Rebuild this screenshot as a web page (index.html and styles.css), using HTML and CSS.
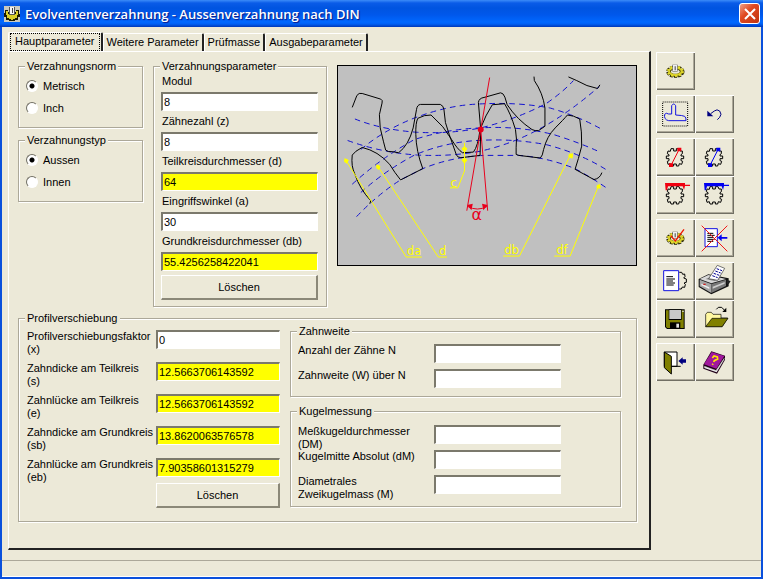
FILE: index.html
```html
<!DOCTYPE html>
<html lang="de">
<head>
    <meta charset="UTF-8">
    <meta name="viewport" content="width=device-width, initial-scale=1.0">
    <title>Evolventenverzahnung - Aussenverzahnung nach DIN</title>
    <link rel="stylesheet" href="styles.css">
</head>
<body>
    <!-- shared icon shapes -->
    <svg class="defs" width="0" height="0" aria-hidden="true">
        <symbol id="gear" viewBox="0 0 117 114">
            <path d="M45 32H53V39H61V32H69L72 39H79V47L75 50V54H83V62H75V68L80 70L77 79L70 77L68 84H61V78H53V84H45L43 77L36 79L34 70L39 68V62H31V54H39V50L34 47L36 39L43 40Z" fill="none" stroke="#000" stroke-width="3"/>
        </symbol>
        <symbol id="cog" viewBox="0 0 117 114">
            <g fill="none">
                <ellipse cx="58" cy="59" rx="23" ry="14" stroke="#222000" stroke-width="9" stroke-dasharray="9 3"/>
                <ellipse cx="58" cy="59" rx="18" ry="11" stroke="#444000" stroke-width="9"/>
                <ellipse cx="58" cy="58" rx="19" ry="11" stroke="#d8cf28" stroke-width="6"/>
                <ellipse cx="58" cy="58" rx="23" ry="14" stroke="#e4dc30" stroke-width="6" stroke-dasharray="6 6"/>
            </g>
            <path d="M49 38h16v21H49z" fill="#777"/>
            <path d="M51 39h12v18H51z" fill="#eee"/>
            <path d="M56 43h3v12h-3z" fill="#444"/>
        </symbol>
    </svg>

    <div class="window">
        <header class="titlebar">
            <svg class="app-icon" viewBox="0 0 16 16">
                <path d="M0 0h16v16H0z" fill="#c9c9c0"/>
                <path d="M1 4h3v2h8V4h3v4h1v3h-2v3h-3v1H5v-1H2v-3H0V7h1z" fill="#1a1a00"/>
                <path d="M2 5h2v3h8V5h2v4h-1v3h-2v1H9v1H7v-1H5v-1H3V9H2z" fill="#d8cf28"/>
                <path d="M5 1h6v8H5z" fill="#555"/>
                <path d="M6 1h4v7H6z" fill="#f4f4f4"/>
                <path d="M8 2h1v5H8z" fill="#444"/>
            </svg>
            <h1>Evolventenverzahnung - Aussenverzahnung nach DIN</h1>
            <button class="close" type="button" aria-label="Schließen">
                <svg viewBox="0 0 12 12"><path d="M1 1L11 11M11 1L1 11" stroke="#fff" stroke-width="2"/></svg>
            </button>
        </header>

        <main class="content">
            <div class="pages">
                <div class="tabs" role="tablist">
                    <button class="tab active" type="button" role="tab" aria-selected="true"><span>Hauptparameter</span></button>
                    <button class="tab" type="button" role="tab"><span>Weitere Parameter</span></button>
                    <button class="tab" type="button" role="tab"><span>Prüfmasse</span></button>
                    <button class="tab" type="button" role="tab"><span>Ausgabeparameter</span></button>
                </div>

                <form class="panel">
                    <div class="upper">
                        <div class="options">
                            <fieldset class="radios">
                                <legend>Verzahnungsnorm</legend>
                                <label><input type="radio" name="norm" checked>Metrisch</label>
                                <label><input type="radio" name="norm">Inch</label>
                            </fieldset>
                            <fieldset class="radios">
                                <legend>Verzahnungstyp</legend>
                                <label><input type="radio" name="typ" checked>Aussen</label>
                                <label><input type="radio" name="typ">Innen</label>
                            </fieldset>
                        </div>

                        <fieldset class="params">
                            <legend>Verzahnungsparameter</legend>
                            <label for="modul">Modul</label>
                            <input type="text" id="modul" value="8">
                            <label for="z">Zähnezahl (z)</label>
                            <input type="text" id="z" value="8">
                            <label for="d">Teilkreisdurchmesser (d)</label>
                            <input type="text" id="d" class="result" value="64">
                            <label for="a">Eingriffswinkel (a)</label>
                            <input type="text" id="a" value="30">
                            <label for="db">Grundkreisdurchmesser (db)</label>
                            <input type="text" id="db" class="result" value="55.4256258422041">
                            <button class="btn" type="button">Löschen</button>
                        </fieldset>

                        <svg class="drawing" viewBox="9 18 900 600">
                            <!-- pitch, base, tip and root circles -->
                            <g fill="none" stroke="#1010d0" stroke-width="3" stroke-dasharray="17 13">
                                <path d="M65 473Q130 405 198 362L265 328Q350 293 450 288L555 288Q640 294 725 328Q775 355 818 385"/>
                                <path d="M78 400Q150 335 240 287Q340 245 450 242Q545 238 640 256Q750 285 828 337"/>
                                <path d="M52 375Q140 295 240 240Q340 208 440 205Q550 198 660 225Q740 250 800 278"/>
                                <path d="M78 270Q150 210 240 175Q340 137 430 133Q550 126 650 145Q730 168 800 206"/>
                                <path d="M60 178Q140 210 245 218Q345 224 440 205Q550 178 640 130Q690 95 720 62"/>
                                <path d="M38 243Q140 280 250 287Q350 292 440 275Q530 255 610 212Q700 165 798 80"/>
                            </g>
                            <g fill="none" stroke="#000" stroke-width="3">
                                <path d="M52 143L66 107Q72 98 82 101L138 118Q145 121 142 130L134 165Q133 205 146 245L153 272Q158 278 175 277L192 280Q222 258 236 205L246 150Q248 135 258 134L318 134Q328 138 329 150Q330 190 345 225L366 285Q368 294 380 295L438 288L440 210L433 128Q435 115 450 113L500 99Q508 99 513 112L520 135Q550 180 595 210Q605 215 615 213L634 200V145Q628 100 602 62L601 50"/>
                                <path d="M705 51L730 62Q760 80 793 86L800 75"/>
                                <path d="M105 434L108 425Q75 390 60 345Q48 320 52 287Q60 275 82 264Q130 275 165 315Q180 340 198 362L265 328Q245 275 244 225Q243 190 250 176Q270 165 290 166Q330 200 352 240Q370 270 385 280L418 278Q432 260 438 210Q455 165 475 135L512 132Q530 160 545 210Q550 240 547 265V285L555 288L620 296Q627 290 630 270Q640 230 665 205Q690 180 702 166Q720 167 739 178Q746 215 745 260Q735 300 725 330L782 361Q800 358 806 340"/>
                            </g>
                            <!-- pressure angle -->
                            <g class="angle">
                                <path d="M467 53L398 455M440 210L461 455M400 442Q430 458 460 442" fill="none" stroke="#e8001c" stroke-width="3"/>
                                <circle cx="440" cy="210" r="9"/>
                                <path d="M399 438L416 434L412 454ZM461 438L444 434L448 454Z"/>
                                <text x="412" y="482">α</text>
                            </g>
                            <!-- dimension leaders -->
                            <g class="leader">
                                <path d="M391 250V335L371 386H347M33 303L215 595H262M130 322L312 595H338M712 285L557 592H508M796 380L710 592H662" fill="none" stroke="#ff0" stroke-width="3"/>
                                <path d="M391 280L382 268L391 260L400 268ZM391 294L400 302L391 314L382 302Z"/>
                                <path d="M28 296L42 303L34 314ZM124 315L138 322L130 333ZM718 280L717 298L704 292ZM800 374L802 389L789 385Z"/>
                                <circle cx="33" cy="304" r="6"/>
                                <circle cx="130" cy="323" r="6"/>
                                <circle cx="712" cy="289" r="7"/>
                                <circle cx="796" cy="382" r="6"/>
                                <text x="349" y="382">c</text>
                                <text x="217" y="590">da</text>
                                <text x="314" y="590">d</text>
                                <text x="511" y="587">db</text>
                                <text x="668" y="587">df</text>
                            </g>
                        </svg>
                    </div>

                    <fieldset class="profile">
                        <legend>Profilverschiebung</legend>
                        <div class="shift">
                            <label for="x">Profilverschiebungsfaktor (x)</label>
                            <input type="text" id="x" value="0">
                            <label for="s">Zahndicke am Teilkreis<br>(s)</label>
                            <input type="text" id="s" class="result" value="12.5663706143592">
                            <label for="e">Zahnlücke am Teilkreis<br>(e)</label>
                            <input type="text" id="e" class="result" value="12.5663706143592">
                            <label for="sb">Zahndicke am Grundkreis (sb)</label>
                            <input type="text" id="sb" class="result" value="13.8620063576578">
                            <label for="eb">Zahnlücke am Grundkreis (eb)</label>
                            <input type="text" id="eb" class="result" value="7.90358601315279">
                            <button class="btn" type="button">Löschen</button>
                        </div>

                        <div class="measures">
                            <fieldset class="measure">
                                <legend>Zahnweite</legend>
                                <label for="n">Anzahl der Zähne N</label>
                                <input type="text" id="n">
                                <label for="w">Zahnweite (W) über N</label>
                                <input type="text" id="w">
                            </fieldset>
                            <fieldset class="measure">
                                <legend>Kugelmessung</legend>
                                <label for="dm1">Meßkugeldurchmesser (DM)</label>
                                <input type="text" id="dm1">
                                <label for="dm2">Kugelmitte Absolut (dM)</label>
                                <input type="text" id="dm2">
                                <label for="m">Diametrales Zweikugelmass (M)</label>
                                <input type="text" id="m">
                            </fieldset>
                        </div>
                    </fieldset>
                </form>
            </div>

            <div class="toolbar">
                <div class="tools">
                    <button type="button" aria-label="Berechnen">
                        <svg viewBox="0 0 117 114"><use href="#cog"/></svg>
                    </button>
                </div>
                <div class="tools">
                    <button type="button" aria-label="Zahnform">
                        <svg viewBox="0 0 117 114">
                            <path d="M20 21H95V93H20Z" fill="none" stroke="#000" stroke-width="3" stroke-dasharray="3 3"/>
                            <path d="M47 57V32Q53 22 59 32V60Q80 61 86 64Q91 68 90 77H38Q23 74 26 58Q30 52 38 57Z" fill="none" stroke="#1414e0" stroke-width="3"/>
                        </svg>
                    </button>
                    <button type="button" aria-label="Rückgängig">
                        <svg viewBox="0 0 117 114">
                            <path d="M37 47V64H55Z" fill="#000080"/>
                            <path d="M47 56L58 48Q66 41 74 48Q82 58 74 67L67 74" fill="none" stroke="#000080" stroke-width="3"/>
                        </svg>
                    </button>
                </div>
                <div class="tools">
                    <button type="button" aria-label="Durchmesser rot">
                        <svg viewBox="0 0 117 114">
                            <use href="#gear"/>
                            <path d="M69 35L45 82" stroke="#f00010" stroke-width="3"/>
                            <path d="M64 29h12v11H64zM39 76h12v11H39z" fill="#f00010"/>
                        </svg>
                    </button>
                    <button type="button" aria-label="Durchmesser blau">
                        <svg viewBox="0 0 117 114">
                            <use href="#gear"/>
                            <path d="M69 35L45 82" stroke="#0000f0" stroke-width="3"/>
                            <path d="M64 29h12v11H64zM39 76h12v11H39z" fill="#0000f0"/>
                        </svg>
                    </button>
                    <button type="button" aria-label="Messschieber rot">
                        <svg viewBox="0 0 117 114">
                            <use href="#gear"/>
                            <path d="M27 21H87V26H102V30H87L84 42L80 31H36L33 43H29Z" fill="#f00010"/>
                        </svg>
                    </button>
                    <button type="button" aria-label="Messschieber blau">
                        <svg viewBox="0 0 117 114">
                            <use href="#gear"/>
                            <path d="M27 21H87V26H102V30H87L84 42L80 31H36L33 43H29Z" fill="#0000f0"/>
                        </svg>
                    </button>
                </div>
                <div class="tools">
                    <button type="button" aria-label="Prüfen">
                        <svg viewBox="0 0 117 114">
                            <use href="#cog"/>
                            <path d="M44 50L58 66L84 31" fill="none" stroke="#f01800" stroke-width="4"/>
                        </svg>
                    </button>
                    <button type="button" aria-label="Ausgabe löschen">
                        <svg viewBox="0 0 117 114">
                            <path d="M30 29H67V83H30Z" fill="#fff" stroke="#1414e0" stroke-width="3"/>
                            <path d="M37 43h18M37 49h22M37 55h18M37 61h22M37 67h18" stroke="#000" stroke-width="3"/>
                            <path d="M68 56L80 46V54H97V59H80V67Z" fill="#0000f0"/>
                            <path d="M20 20L97 97M97 20L20 97" stroke="#f01818" stroke-width="3"/>
                        </svg>
                    </button>
                </div>
                <div class="tools">
                    <button type="button" aria-label="Ausgabe">
                        <svg viewBox="0 0 117 114">
                            <path d="M23 26H68V86H23Z" fill="#fff" stroke="#1414e0" stroke-width="3"/>
                            <path d="M31 44h20M31 51h26M31 57h20M31 63h26M31 69h22" stroke="#000" stroke-width="3"/>
                            <path d="M70 31H77L80 37L86 36L87 44L83 48L91 51V61L84 63L88 67L86 76L79 75L76 81H70" fill="none" stroke="#000" stroke-width="3"/>
                        </svg>
                    </button>
                    <button type="button" aria-label="Drucken">
                        <svg viewBox="0 0 117 114">
                            <path d="M11 51L40 37L101 49V73L49 97L11 75Z" fill="#111"/>
                            <path d="M14 53L49 66V93L14 73Z" fill="#a5a5a5"/>
                            <path d="M49 66L93 53V72L49 93Z" fill="#777"/>
                            <path d="M14 51L40 39L93 51L49 64Z" fill="#d8d8d8"/>
                            <path d="M32 51L46 45L78 51L58 57Z" fill="#888"/>
                            <path d="M95 54L107 57L101 67L95 65Z" fill="#222"/>
                            <path d="M41 50L67 10L89 19L68 55Z" fill="#fff" stroke="#333" stroke-width="2"/>
                            <path d="M65 20L81 26M61 27L77 33M56 34L73 40M52 41L68 47" stroke="#000090" stroke-width="3" stroke-dasharray="8 3"/>
                            <path d="M19 65L43 76V81L19 70Z" fill="#eee"/>
                            <path d="M25 65h7v4h-7z" fill="#d02020"/>
                            <path d="M53 74L89 60V65L53 80Z" fill="#ccc"/>
                        </svg>
                    </button>
                    <button type="button" aria-label="Speichern">
                        <svg viewBox="0 0 117 114">
                            <path d="M27 28H86V87H33L27 81Z" fill="#000"/>
                            <path d="M30 31H83V84H34L30 80Z" fill="#808000"/>
                            <path d="M38 28H77V60H38Z" fill="#000"/>
                            <path d="M40 30H75V57H40Z" fill="#c8c8c8"/>
                            <path d="M79 32h4v4h-4z" fill="#eee"/>
                            <path d="M42 67H73V85H42Z" fill="#000"/>
                            <path d="M61 71h8v12h-8z" fill="#e0e0e0"/>
                        </svg>
                    </button>
                    <button type="button" aria-label="Öffnen">
                        <svg viewBox="0 0 117 114">
                            <path d="M32 79V43L37 37H49L54 43H78V54H98L82 80H32Z" fill="#fff8a0" stroke="#000" stroke-width="2"/>
                            <path d="M32 80L51 55H99L81 80Z" fill="#808000" stroke="#000" stroke-width="2"/>
                            <path d="M64 28L70 22H80L89 31" fill="none" stroke="#000" stroke-width="3"/>
                            <path d="M94 23V36H82Z" fill="#000"/>
                        </svg>
                    </button>
                </div>
                <div class="tools">
                    <button type="button" aria-label="Beenden">
                        <svg viewBox="0 0 117 114">
                            <path d="M25 27H63V70H25Z" fill="#fff" stroke="#000" stroke-width="3"/>
                            <path d="M25 27L46 40V93L25 74Z" fill="#808000" stroke="#000" stroke-width="3"/>
                            <path d="M48 70H74" stroke="#000" stroke-width="3"/>
                            <path d="M67 54L80 43V49H90V59H80V65Z" fill="#000080"/>
                        </svg>
                    </button>
                    <button type="button" aria-label="Hilfe">
                        <svg viewBox="0 0 117 114">
                            <path d="M25 65L49 25L90 38V50L66 92L25 77Z" fill="#200018"/>
                            <path d="M27 64L50 27L88 39L64 77Z" fill="#a0189c"/>
                            <path d="M28 69L63 82L66 77L88 44V49L65 88L28 75Z" fill="#eee"/>
                            <path d="M28 70L64 83L88 46" fill="none" stroke="#888" stroke-width="1"/>
                            <path d="M52 45L57 39L67 42L68 48L58 53L56 57M54 62L52 65" fill="none" stroke="#ffe800" stroke-width="5"/>
                        </svg>
                    </button>
                </div>
            </div>
        </main>

        <footer class="statusbar"></footer>
    </div>
</body>
</html>
```
FILE: styles.css
```css
* {
    box-sizing: border-box;
}

body {
    margin: 0;
    font-family: "Liberation Sans", Arial, sans-serif;
    font-size: 11px;
    line-height: 13px;
    color: #000;
    background-color: #ece9d8;
}

button,
input {
    font: inherit;
    color: inherit;
}

.defs {
    position: absolute;
}

.window {
    display: flex;
    flex-direction: column;
    min-height: 100vh;
    border: solid #0a50dc;
    border-width: 0 2px 2px;
}

/* title bar */
.titlebar {
    display: flex;
    align-items: center;
    height: 27px;
    margin: 0 -2px;
    padding: 0 3px 0 4px;
    background: linear-gradient(#3c8cf8 0, #0a5ce8 3px, #0054e0 8px, #0058ec 15px, #0068ff 22px, #0060f4 24px, #0038b8 27px);
}

.app-icon {
    width: 16px;
    height: 16px;
    margin-right: 5px;
}

.titlebar h1 {
    flex: 1;
    margin: 0;
    font-family: "Open Sans", "Trebuchet MS", sans-serif;
    font-size: 13px;
    font-weight: 600;
    line-height: 20px;
    color: #fff;
    text-shadow: 1px 1px 1px #0a1883;
}

.close {
    display: flex;
    align-items: center;
    justify-content: center;
    width: 21px;
    height: 21px;
    padding: 0;
    border: 1px solid #fff;
    border-radius: 3px;
    background: linear-gradient(135deg, #f0a088, #e04a22 40%, #c03410);
}

.close svg {
    width: 12px;
    height: 12px;
}

/* layout */
.content {
    flex: 1;
    display: flex;
    gap: 5px;
    padding: 5px 27px 10px 6px;
}

.pages {
    flex: 1;
    display: flex;
    flex-direction: column;
    min-width: 0;
}

.tabs {
    display: flex;
    align-items: flex-end;
    height: 19px;
}

.tab {
    height: 18px;
    padding: 0 3px;
    border: solid;
    border-width: 1px 2px 0 1px;
    border-color: #fff #222 #fff #fff;
    border-radius: 2px 2px 0 0;
    background: none;
    white-space: nowrap;
}

.tab.active {
    height: 19px;
    padding: 0 1px;
}

.tab.active span {
    display: block;
    padding: 1px 4px 2px;
    border: 1px dotted #000;
}

.panel {
    flex: 1;
    display: flex;
    flex-direction: column;
    gap: 5px;
    padding: 8px 12px 26px 9px;
    border: solid;
    border-width: 1px 2px 2px 1px;
    border-color: #fff #222 #222 #fff;
}

.upper {
    display: flex;
    align-items: flex-start;
    gap: 10px;
}

.options {
    flex: 0 0 125px;
    display: flex;
    flex-direction: column;
    gap: 6px;
}

/* group boxes */
fieldset {
    min-width: 0;
    margin: 0;
    padding: 0;
    border: 1px solid #aca899;
    box-shadow: 1px 1px #fff, inset 1px 1px #fff;
}

legend {
    margin-left: 6px;
    padding: 0 2px;
    background-color: #ece9d8;
}

.radios {
    padding: 6px 7px 12px;
}

.radios legend {
    margin-left: -1px;
}

.radios label {
    display: flex;
    align-items: center;
    gap: 5px;
    height: 14px;
}

.radios label + label {
    margin-top: 8px;
}

input[type="radio"] {
    appearance: none;
    width: 12px;
    height: 12px;
    margin: 0;
    border: 1px solid;
    border-color: #716f64 #fff #fff #716f64;
    border-radius: 50%;
    background-color: #fff;
}

input[type="radio"]:checked {
    background-image: radial-gradient(#000 2px, transparent 3px);
}

input[type="text"] {
    width: 100%;
    height: 19px;
    min-width: 0;
    padding: 0 1px;
    border: solid;
    border-width: 2px 1px 1px 2px;
    border-color: #7b796c #fff #fff #7b796c;
    border-radius: 0;
    background-color: #fff;
}

input[type="text"].result {
    background-color: #ff0;
}

.btn {
    height: 25px;
    padding: 0;
    border: solid;
    border-width: 1px 2px 2px 1px;
    border-color: #fff #8b8878 #8b8878 #fff;
    background-color: #ece9d8;
}

.params {
    flex: 0 0 174px;
    padding: 2px 8px 6px 7px;
}

.params legend {
    margin-left: -1px;
}

.params label {
    display: block;
    height: 14px;
    margin-bottom: 3px;
    padding-left: 1px;
}

.params input {
    display: block;
    margin-bottom: 4px;
}

.params .btn {
    display: block;
    width: 100%;
}

.drawing {
    flex: 1;
    min-width: 0;
    margin-top: 5px;
    border: 1px solid #000;
    background-color: #c0c0c0;
}

.drawing text {
    font-family: "DejaVu Sans", sans-serif;
    font-size: 35px;
}

.drawing .angle text {
    font-size: 48px;
}

.angle {
    fill: #e8001c;
}

.leader {
    fill: #ff0;
}

/* profile shift */
.profile {
    display: flex;
    gap: 10px;
    padding: 0 15px 6px 8px;
}

.profile > legend {
    margin-left: -2px;
}

.shift {
    flex: 0 0 253px;
    display: grid;
    grid-template-columns: 129px 1fr;
    grid-auto-rows: 25px;
    row-gap: 7px;
    margin-top: 5px;
}

.shift label,
.measure label {
    max-height: 25px;
    overflow: hidden;
}

.shift .btn {
    grid-column: 2;
    margin-top: -7px;
}

.measures {
    flex: 1;
    display: flex;
    flex-direction: column;
    gap: 8px;
    min-width: 0;
}

.measure {
    display: grid;
    grid-template-columns: 136px 1fr;
    grid-auto-rows: 25px;
    padding: 6px 59px 2px 7px;
}

.measure + .measure {
    padding-top: 7px;
    padding-bottom: 6px;
}

.measure legend {
    margin-left: -1px;
}

.measure label {
    padding-right: 16px;
}

/* tool buttons */
.toolbar {
    flex: 0 0 78px;
    display: flex;
    flex-direction: column;
    gap: 5px;
    padding-top: 20px;
}

.tools {
    display: grid;
    grid-template-columns: 39px 39px;
}

.tools button {
    height: 38px;
    padding: 0;
    border: 0;
    box-shadow: inset 1px 1px #fff, inset -1px -1px #716f64, inset -2px -2px #aca899;
    background: none;
}

.tools svg {
    display: block;
    width: 39px;
    height: 38px;
}

.statusbar {
    height: 17px;
    border-top: 1px solid #aca899;
    border-bottom: 1px solid #fff;
}
```
